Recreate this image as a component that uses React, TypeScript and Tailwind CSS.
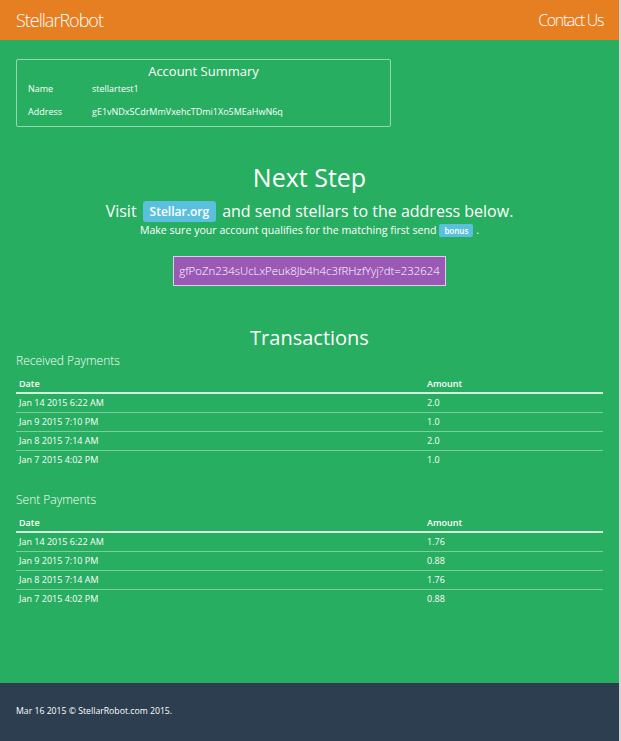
import React from "react";

const received = [
  { date: "Jan 14 2015 6:22 AM", amount: "2.0" },
  { date: "Jan 9 2015 7:10 PM", amount: "1.0" },
  { date: "Jan 8 2015 7:14 AM", amount: "2.0" },
  { date: "Jan 7 2015 4:02 PM", amount: "1.0" },
];

const sent = [
  { date: "Jan 14 2015 6:22 AM", amount: "1.76" },
  { date: "Jan 9 2015 7:10 PM", amount: "0.88" },
  { date: "Jan 8 2015 7:14 AM", amount: "1.76" },
  { date: "Jan 7 2015 4:02 PM", amount: "0.88" },
];

function PaymentTable({ rows }: { rows: { date: string; amount: string }[] }) {
  return (
    <table className="w-full border-collapse text-[9px] text-white">
      <thead>
        <tr className="border-b-2 border-white/80">
          <th className="w-[408px] px-[3px] pb-[1px] text-left font-semibold leading-[14px]">Date</th>
          <th className="px-[3px] pb-[1px] text-left font-semibold leading-[14px]">Amount</th>
        </tr>
      </thead>
      <tbody>
        {rows.map((r, i) => (
          <tr key={i} className="border-b border-white/40 last:border-b-0">
            <td className="h-[19px] px-[3px]">{r.date}</td>
            <td className="h-[19px] px-[3px]">{r.amount}</td>
          </tr>
        ))}
      </tbody>
    </table>
  );
}

export default function App() {
  return (
    <div
      className="flex h-[741px] w-[621px] flex-col overflow-hidden border-r-2 border-[#d4d4d4] bg-[#27ae60]"
      style={{ fontFamily: '"Open Sans", "Noto Sans", sans-serif' }}
    >
      <nav className="flex h-[40px] shrink-0 items-center justify-between pl-[16px] pr-[16px] bg-[#e67e22] text-white">
        <span className="text-[18px] font-light tracking-[-1px]">StellarRobot</span>
        <span className="text-[16px] font-light tracking-[-1.4px]">Contact Us</span>
      </nav>

      <main className="flex-1 px-[16px] pt-[19px] text-white">
        <div className="w-[375px] rounded-[2px] border border-white/50 px-[11px] pt-[1px] pb-[7px]">
          <h2 className="text-center text-[13px] leading-[20px]">Account Summary</h2>
          <div className="grid grid-cols-[64px_1fr] gap-y-[8px] text-[9px] leading-[15px]">
            <span>Name</span>
            <span>stellartest1</span>
            <span>Address</span>
            <span>gE1vNDxSCdrMmVxehcTDmi1Xo5MEaHwN6q</span>
          </div>
        </div>

        <section className="mt-[33px] flex flex-col items-center">
          <h1 className="text-[25px] leading-[34px]">Next Step</h1>
          <p className="mt-[6px] flex items-center text-[16px] leading-[22px]">
            Visit
            <span className="mx-[6px] rounded-[3px] bg-[#5bc0de] px-[7px] py-[2px] text-[12px] font-semibold leading-[17px]">
              Stellar.org
            </span>
            and send stellars to the address below.
          </p>
          <p className="mt-[1px] flex items-center text-[10.6px] leading-[14px]">
            Make sure your account qualifies for the matching first send
            <span className="mx-[3px] rounded-[2px] bg-[#5bc0de] px-[5px] py-[1px] text-[8px] font-semibold leading-[11px]">
              bonus
            </span>
            .
          </p>
          <div className="mt-[19px] border border-white/70 bg-[#9b59b6] px-[5px] py-[5px] text-[11.4px] font-light leading-[18px]">
            gfPoZn234sUcLxPeuk8Jb4h4c3fRHzfYyj?dt=232624
          </div>
        </section>

        <section className="mt-[38px]">
          <h2 className="text-center text-[20px] leading-[28px]">Transactions</h2>
          <h3 className="mt-0 text-[12px] font-light leading-[18px]">Received Payments</h3>
          <div className="mt-[7px]">
            <PaymentTable rows={received} />
          </div>
          <h3 className="mt-[22px] text-[12px] font-light leading-[18px]">Sent Payments</h3>
          <div className="mt-[7px]">
            <PaymentTable rows={sent} />
          </div>
        </section>
      </main>

      <footer className="flex h-[58px] shrink-0 items-center bg-[#2c3e50] px-[16px] text-[8.7px] text-white">
        Mar 16 2015 © StellarRobot.com 2015.
      </footer>
    </div>
  );
}
